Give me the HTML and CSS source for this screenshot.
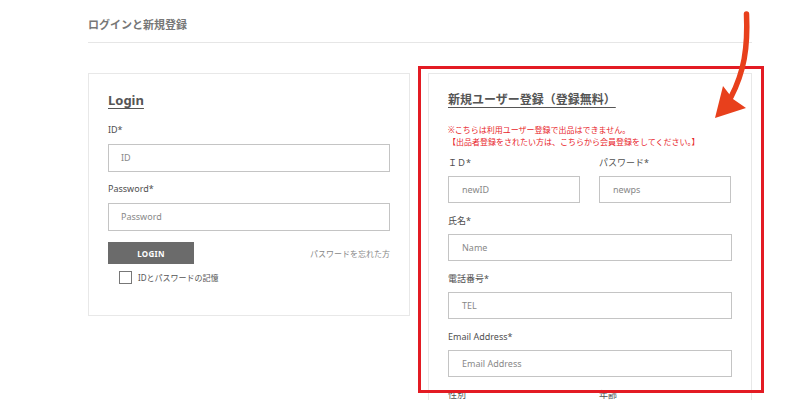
FILE: index.html
```html
<!DOCTYPE html>
<html lang="ja">
<head>
<meta charset="utf-8">
<title>ログインと新規登録</title>
<link rel="stylesheet" href="styles.css">
</head>
<body>
<div class="page">
  <div class="container">
    <h1 class="page-title">ログインと新規登録</h1>
    <div class="columns">
      <section class="card login-card">
        <h2 class="card-title">Login</h2>
        <label class="field-label">ID*</label>
        <div class="input">ID</div>
        <label class="field-label field-label-pw">Password*</label>
        <div class="input">Password</div>
        <div class="login-row">
          <button class="login-btn">LOGIN</button>
          <a class="forgot">パスワードを忘れた方</a>
        </div>
        <div class="remember">
          <span class="checkbox"></span>
          <span class="remember-text">IDとパスワードの記憶</span>
        </div>
      </section>

      <section class="card register-card">
        <h2 class="card-title">新規ユーザー登録（登録無料）</h2>
        <p class="notice">※こちらは利用ユーザー登録で出品はできません。<br>【出品者登録をされたい方は、こちらから会員登録をしてください。】</p>
        <div class="pair pair-first">
          <div class="field">
            <label class="field-label">ＩＤ*</label>
            <div class="input">newID</div>
          </div>
          <div class="field">
            <label class="field-label">パスワード*</label>
            <div class="input">newps</div>
          </div>
        </div>
        <div class="field row">
          <label class="field-label">氏名*</label>
          <div class="input">Name</div>
        </div>
        <div class="field row">
          <label class="field-label">電話番号*</label>
          <div class="input">TEL</div>
        </div>
        <div class="field row">
          <label class="field-label">Email Address*</label>
          <div class="input">Email Address</div>
        </div>
        <div class="pair row">
          <div class="field">
            <label class="field-label">性別</label>
            <div class="input">性別</div>
          </div>
          <div class="field">
            <label class="field-label">年齢</label>
            <div class="input">年齢</div>
          </div>
        </div>
        <div class="highlight"></div>
      </section>
    </div>
  </div>
  <svg class="arrow" width="70" height="130" viewBox="700 0 70 130" aria-hidden="true">
    <path d="M746.5 14 C748 48 744 72 731 97" fill="none" stroke="#e8401c" stroke-width="5.5" stroke-linecap="round"/>
    <path d="M715 118 L723 86 L733 99 L746 108 Z" fill="#e8401c"/>
  </svg>
</div>
</body>
</html>
```

FILE: styles.css
```css
* {
  box-sizing: border-box;
}

html, body {
  margin: 0;
  padding: 0;
  background: #ffffff;
}

body {
  font-family: "Noto Sans", "Noto Sans CJK JP", sans-serif;
  color: #555;
}

.page {
  position: relative;
  width: 800px;
  height: 400px;
  overflow: hidden;
}

.container {
  margin-left: 88px;
  width: 664px;
}

.page-title {
  margin: 0;
  padding-top: 17px;
  padding-bottom: 9px;
  font-size: 11px;
  line-height: 16px;
  font-weight: 700;
  color: #777;
  border-bottom: 1px solid #e6e6e6;
}

.columns {
  display: grid;
  grid-template-columns: 322px 324px;
  column-gap: 18px;
  align-items: start;
  margin-top: 30px;
}

.card {
  border: 1px solid #e8e8e8;
  padding: 17px 19px 31px;
  display: flex;
  flex-direction: column;
}

.card-title {
  margin: 0;
  font-size: 12px;
  line-height: 18px;
  font-weight: 700;
  color: #555;
  text-decoration: underline;
  text-underline-offset: 3px;
  text-decoration-thickness: 1px;
  align-self: flex-start;
}

.login-card .card-title {
  font-size: 13px;
}

.field-label {
  display: block;
  font-size: 9px;
  line-height: 14px;
  color: #4f4f4f;
}

.login-card .field-label {
  margin-top: 14px;
  margin-bottom: 7px;
}

.login-card .field-label-pw {
  margin-top: 10px;
}

.input {
  height: 28px;
  border: 1px solid #c4c4c4;
  padding-left: 12px;
  font-size: 9px;
  line-height: 26px;
  color: #888;
}

.login-row {
  display: flex;
  justify-content: space-between;
  align-items: center;
  margin-top: 11px;
}

.login-btn {
  width: 86px;
  height: 22px;
  border: none;
  background: #6b6b6b;
  color: #fff;
  font-family: inherit;
  font-size: 8px;
  font-weight: 700;
  letter-spacing: 0.3px;
  padding: 0;
}

.forgot {
  font-size: 8px;
  color: #888;
}

.remember {
  display: flex;
  align-items: center;
  margin-top: 7px;
  margin-left: 11px;
}

.checkbox {
  width: 13px;
  height: 13px;
  border: 1px solid #777;
  background: #fff;
}

.remember-text {
  margin-left: 6px;
  font-size: 8px;
  color: #555;
}

.register-card {
  position: relative;
  padding-bottom: 60px;
}

.notice {
  margin: 15px 0 0;
  font-size: 8px;
  line-height: 12px;
  color: #e8242a;
}

.pair {
  display: grid;
  grid-template-columns: 132px 132px;
  column-gap: 19px;
}

.field {
  display: flex;
  flex-direction: column;
}

.register-card .field-label {
  margin-top: 0;
  margin-bottom: 6px;
}

.pair-first {
  margin-top: 8px;
}

.row {
  margin-top: 11px;
}

.register-card .input {
  height: 27px;
  line-height: 25px;
  padding-left: 13px;
}

.highlight {
  position: absolute;
  left: -11px;
  top: -8px;
  width: 346px;
  height: 327px;
  border: 3px solid #e31b23;
  pointer-events: none;
}

.arrow {
  position: absolute;
  left: 700px;
  top: 0;
}
```
